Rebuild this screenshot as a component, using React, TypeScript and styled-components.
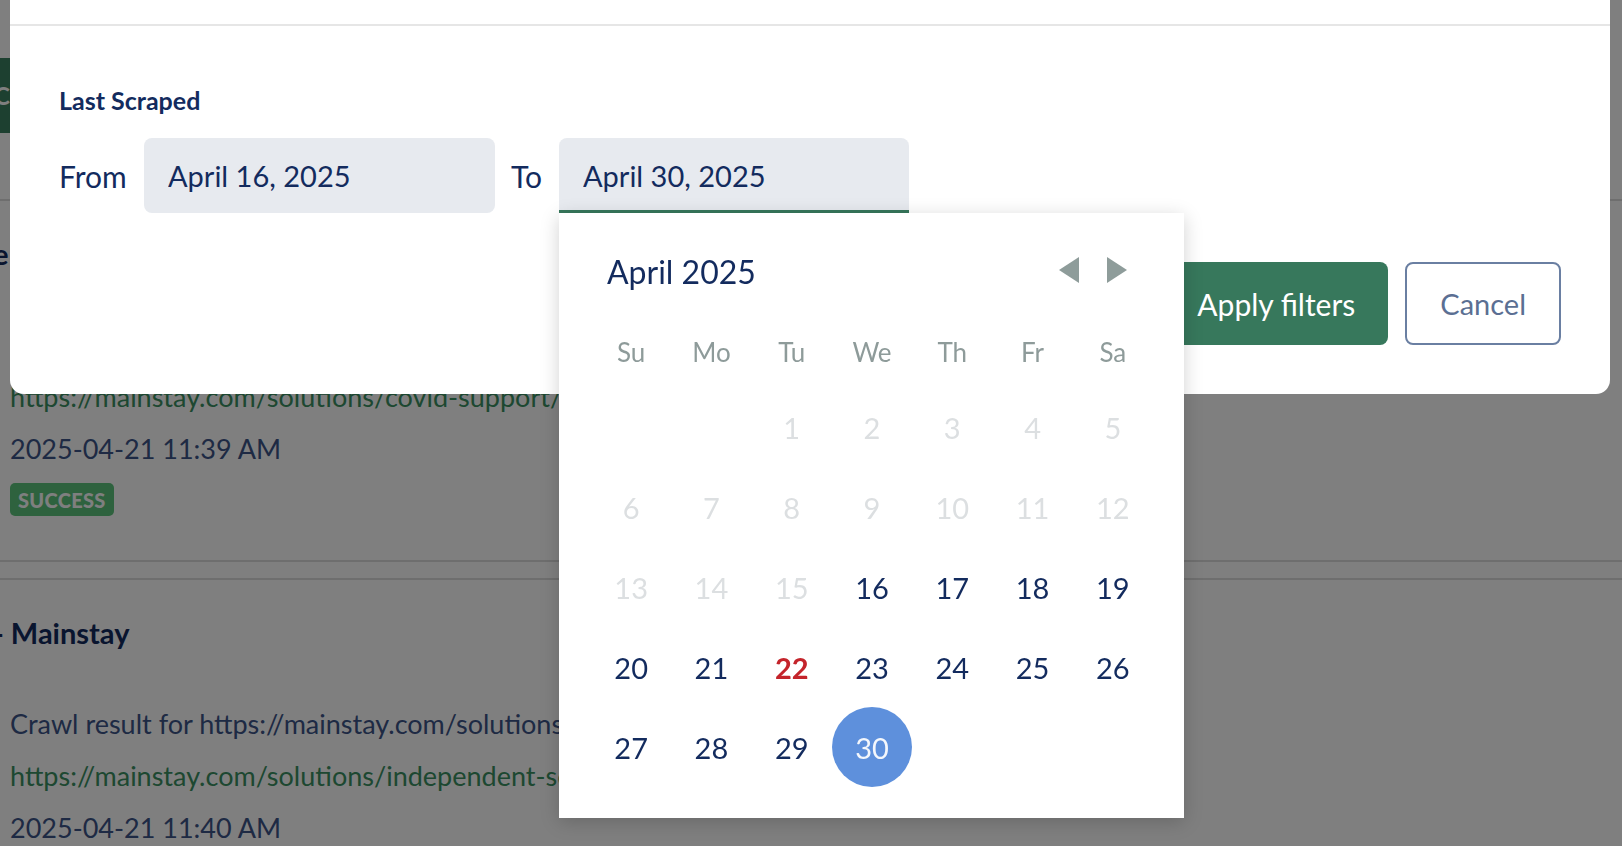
import styled, { createGlobalStyle, css } from 'styled-components';

const NAVY = '#132b5e';

const GlobalStyle = createGlobalStyle`
  html, body {
    margin: 0;
    padding: 0;
    height: 100%;
    overflow: hidden;
  }
  body {
    background: #ffffff;
    font-family: Lato, 'Liberation Sans', sans-serif;
  }
  * {
    box-sizing: border-box;
  }
`;

/* ---------- page behind the dialog ---------- */

const Page = styled.main`
  display: flex;
  flex-direction: column;
  padding-top: 58px;
`;

const Toolbar = styled.div`
  display: flex;
  height: 75px;
  margin-bottom: 66px;
`;

const ToolbarButton = styled.button`
  margin-left: -30px;
  height: 75px;
  padding: 0 24px;
  border: none;
  border-radius: 8px;
  background: #3a8060;
  color: #ffffff;
  font-family: Lato, sans-serif;
  font-weight: 700;
  font-size: 24px;
`;

const ResultList = styled.div`
  display: flex;
  flex-direction: column;
  gap: 16px;
`;

const ResultCard = styled.article`
  display: flex;
  flex-direction: column;
  border-top: 2px solid #dcdcdc;
  border-bottom: 2px solid #dcdcdc;
  padding: 30px 0 44px 10px;
`;

const ResultTitle = styled.h3`
  margin: 0 0 42px;
  font-size: 29px;
  font-weight: 700;
  line-height: 46px;
  color: ${NAVY};
  text-indent: -17px;
  white-space: nowrap;
`;

const ResultLine = styled.p<{ $tone: 'text' | 'link' }>`
  margin: 0;
  font-size: 27px;
  line-height: 52px;
  white-space: nowrap;
  color: ${(p) => (p.$tone === 'link' ? '#3a9062' : '#3c5488')};
`;

const StatusBadge = styled.span`
  align-self: flex-start;
  display: inline-flex;
  align-items: center;
  height: 33px;
  margin-top: 8px;
  padding: 0 8px;
  border-radius: 5px;
  background: #5cc47c;
  color: #ffffff;
  font-size: 20px;
  font-weight: 900;
  letter-spacing: 0.3px;
`;

/* ---------- dialog ---------- */

const Overlay = styled.div`
  position: fixed;
  inset: 0;
  display: flex;
  align-items: flex-start;
  padding: 0 12px 0 10px;
  background: rgba(0, 0, 0, 0.5);
`;

const Modal = styled.section`
  position: relative;
  width: 100%;
  margin-top: -58px;
  background: #ffffff;
  border-radius: 0 0 14px 14px;
`;

const ModalHeader = styled.header`
  display: flex;
  align-items: center;
  height: 84px;
  padding: 0 49px;
  border-bottom: 2px solid #e6e6e6;
  font-size: 29px;
  font-weight: 700;
  color: ${NAVY};
`;

const ModalBody = styled.div`
  display: flex;
  flex-direction: column;
  padding: 60px 49px 49px;
`;

const SectionLabel = styled.h4`
  margin: 0 0 24px;
  font-size: 25px;
  font-weight: 700;
  line-height: 28px;
  color: ${NAVY};
`;

const DateRow = styled.div`
  display: flex;
  align-items: center;
  gap: 16px;
  height: 75px;
`;

const FieldLabel = styled.label<{ $width: number }>`
  width: ${(p) => p.$width}px;
  font-size: 30px;
  color: ${NAVY};
`;

const DateField = styled.div<{ $width: number }>`
  position: relative;
  width: ${(p) => p.$width}px;
`;

const DateInput = styled.input<{ $open?: boolean }>`
  display: block;
  width: 100%;
  height: 75px;
  padding: 0 24px;
  border: none;
  outline: none;
  background: #e7eaef;
  border-radius: 8px;
  font-family: Lato, sans-serif;
  font-size: 29px;
  color: ${NAVY};

  ${(p) =>
    p.$open &&
    css`
      border-radius: 8px 8px 0 0;
      box-shadow: inset 0 -3px 0 #37785c;
    `}
`;

const ButtonRow = styled.div`
  display: flex;
  justify-content: flex-end;
  gap: 17px;
  margin-top: 49px;
`;

const PrimaryButton = styled.button`
  height: 83px;
  padding: 0 33px;
  border: none;
  border-radius: 8px;
  background: #37785c;
  color: #ffffff;
  font-family: Lato, sans-serif;
  font-size: 30px;
`;

const SecondaryButton = styled.button`
  height: 83px;
  padding: 0 33px;
  border: 2px solid #6a7fa2;
  border-radius: 8px;
  background: #ffffff;
  color: #5b6f93;
  font-family: Lato, sans-serif;
  font-size: 29px;
`;

/* ---------- calendar popup ---------- */

const CalendarPopup = styled.div`
  position: absolute;
  top: 100%;
  left: 0;
  z-index: 2;
  width: 625px;
  padding: 26px 31px 31px 32px;
  background: #ffffff;
  box-shadow: 0 4px 18px rgba(0, 0, 0, 0.18);
`;

const CalendarHeader = styled.div`
  display: flex;
  align-items: center;
  justify-content: space-between;
  height: 62px;
  padding: 0 26px 0 16px;
`;

const MonthTitle = styled.div`
  padding-top: 5px;
  font-size: 32px;
  line-height: 1.2;
  color: ${NAVY};
`;

const NavArrows = styled.div`
  display: flex;
  gap: 28px;
`;

const NavArrow = styled.button<{ $dir: 'prev' | 'next' }>`
  width: 0;
  height: 0;
  padding: 0;
  background: none;
  border: none;
  border-top: 13px solid transparent;
  border-bottom: 13px solid transparent;
  ${(p) =>
    p.$dir === 'prev'
      ? 'border-right: 20px solid #8e9c9a;'
      : 'border-left: 20px solid #8e9c9a;'}
`;

const WeekdayRow = styled.div`
  display: grid;
  grid-template-columns: repeat(7, 1fr);
  height: 86px;
  padding-top: 36px;
  font-size: 26px;
  line-height: 1.2;
  color: #8e9b9a;
  text-align: center;
`;

const DayGrid = styled.div`
  display: grid;
  grid-template-columns: repeat(7, 1fr);
  grid-auto-rows: 80px;
`;

type DayState = 'normal' | 'disabled' | 'today' | 'selected' | 'blank';

const DayCell = styled.div<{ $state: DayState }>`
  display: flex;
  align-items: center;
  justify-content: center;
  font-size: 29px;
  color: ${NAVY};

  ${(p) => p.$state === 'disabled' && css`color: #dcdfe1;`}
  ${(p) =>
    p.$state === 'today' &&
    css`
      color: #c4242b;
      font-weight: 700;
    `}
`;

const SelectedDot = styled.span`
  display: flex;
  align-items: center;
  justify-content: center;
  width: 80px;
  height: 80px;
  border-radius: 50%;
  background: #5e90dc;
  color: #f4f7fc;
`;

const WEEKDAYS = ['Su', 'Mo', 'Tu', 'We', 'Th', 'Fr', 'Sa'];

const results = [
  {
    title: 'e - Mainstay',
    summary: 'Crawl result for https://mainstay.com/solutions/covid-support/',
    url: 'https://mainstay.com/solutions/covid-support/',
    date: '2025-04-21 11:39 AM',
    status: 'SUCCESS',
  },
  {
    title: '- Mainstay',
    summary: 'Crawl result for https://mainstay.com/solutions/independent-schools/',
    url: 'https://mainstay.com/solutions/independent-schools/',
    date: '2025-04-21 11:40 AM',
    status: 'SUCCESS',
  },
];

function dayState(day: number): DayState {
  if (day === 30) return 'selected';
  if (day === 22) return 'today';
  if (day < 16) return 'disabled';
  return 'normal';
}

function Calendar() {
  const cells: (number | null)[] = [null, null];
  for (let d = 1; d <= 30; d++) cells.push(d);

  return (
    <CalendarPopup>
      <CalendarHeader>
        <MonthTitle>April 2025</MonthTitle>
        <NavArrows>
          <NavArrow $dir="prev" aria-label="Previous month" />
          <NavArrow $dir="next" aria-label="Next month" />
        </NavArrows>
      </CalendarHeader>
      <WeekdayRow>
        {WEEKDAYS.map((w) => (
          <span key={w}>{w}</span>
        ))}
      </WeekdayRow>
      <DayGrid>
        {cells.map((day, i) => {
          if (day === null) return <DayCell key={`b${i}`} $state="blank" />;
          const state = dayState(day);
          return (
            <DayCell key={day} $state={state}>
              {state === 'selected' ? <SelectedDot>{day}</SelectedDot> : day}
            </DayCell>
          );
        })}
      </DayGrid>
    </CalendarPopup>
  );
}

export default function App() {
  return (
    <>
      <GlobalStyle />
      <Page>
        <Toolbar>
          <ToolbarButton>Crawl now</ToolbarButton>
        </Toolbar>
        <ResultList>
          {results.map((r) => (
            <ResultCard key={r.url}>
              <ResultTitle>{r.title}</ResultTitle>
              <ResultLine $tone="text">{r.summary}</ResultLine>
              <ResultLine $tone="link">{r.url}</ResultLine>
              <ResultLine $tone="text">{r.date}</ResultLine>
              <StatusBadge>{r.status}</StatusBadge>
            </ResultCard>
          ))}
        </ResultList>
      </Page>

      <Overlay>
        <Modal>
          <ModalHeader>Filters</ModalHeader>
          <ModalBody>
            <SectionLabel>Last Scraped</SectionLabel>
            <DateRow>
              <FieldLabel $width={69}>From</FieldLabel>
              <DateField $width={351}>
                <DateInput readOnly value="April 16, 2025" />
              </DateField>
              <FieldLabel $width={32}>To</FieldLabel>
              <DateField $width={350}>
                <DateInput readOnly $open value="April 30, 2025" />
                <Calendar />
              </DateField>
            </DateRow>
            <ButtonRow>
              <PrimaryButton>Apply filters</PrimaryButton>
              <SecondaryButton>Cancel</SecondaryButton>
            </ButtonRow>
          </ModalBody>
        </Modal>
      </Overlay>
    </>
  );
}
